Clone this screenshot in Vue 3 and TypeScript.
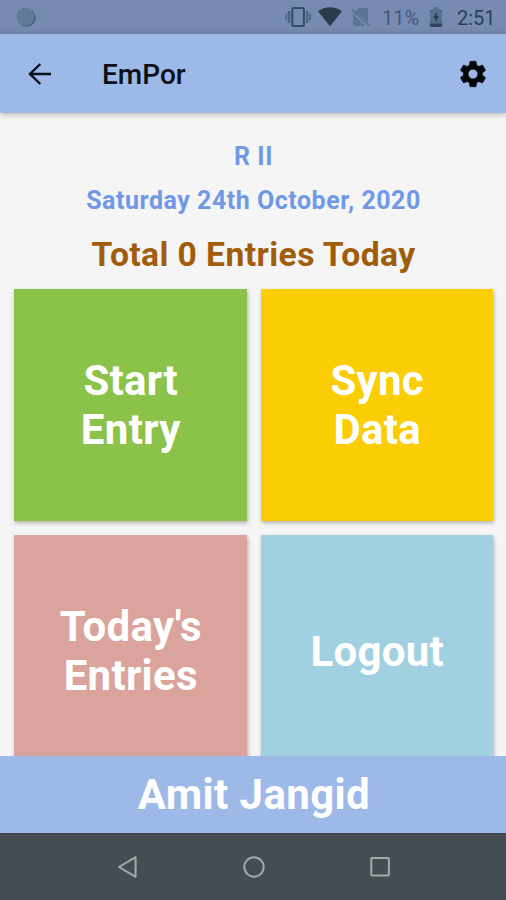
<script setup lang="ts">
interface Tile {
  id: string
  lines: string[]
}

const tiles: Tile[] = [
  { id: 'start', lines: ['Start', 'Entry'] },
  { id: 'sync', lines: ['Sync', 'Data'] },
  { id: 'today', lines: ["Today's", 'Entries'] },
  { id: 'logout', lines: ['Logout'] },
]
</script>

<template>
  <div class="screen">
    <div class="status">
      <svg class="dot" viewBox="0 0 20 20">
        <circle cx="10.7" cy="10.7" r="9" fill="#445c7b" />
        <circle cx="9.6" cy="9.6" r="9" fill="#617896" />
      </svg>
      <svg class="vibrate" viewBox="0 0 26 22">
        <rect x="7.3" y="2" width="11.6" height="18" rx="1.6" fill="none" stroke="#344b66" stroke-width="2" />
        <path d="M4 5v12M22.2 5v12" stroke="#4f6684" stroke-width="2.6" />
        <path d="M1.2 8v6M25 8v6" stroke="#4f6684" stroke-width="1.8" />
      </svg>
      <svg class="wifi" viewBox="0 0 24 20">
        <path d="M0 4.2C7 -1.1 17 -1.1 24 4.2L12 19.2Z" fill="#2b3b4d" />
      </svg>
      <svg class="sim" viewBox="0 0 20 20">
        <path d="M8.2 1H15q2 0 2 2v12.6L4.4 4.8ZM2 6.6 14.5 19H4q-2 0-2-2Z" fill="#5d7394" />
        <path d="M.7 2.3 18.3 18.8" stroke="#5d7394" stroke-width="1.7" />
      </svg>
      <span class="percent">11%</span>
      <svg class="battery" viewBox="0 0 12 20">
        <path d="M3.7 0h4.6v2H11q1 0 1 1v14H0V3q0-1 1-1h2.7Z" fill="#596f8e" />
        <path d="M0 16.5h12V19q0 1-1 1H1q-1 0-1-1Z" fill="#2e435c" />
        <path d="M7 4.5 3 11h2.5v4.5L9 9H6.5Z" fill="#263b54" />
      </svg>
      <span class="clock">2:51</span>
    </div>

    <header class="appbar">
      <svg class="back" viewBox="0 0 24 24">
        <path d="M12.3 2 2 12l10.3 10M2.5 12H23" fill="none" stroke="#0b0f16" stroke-width="2.4" />
      </svg>
      <h1>EmPor</h1>
      <svg class="gear" viewBox="0 0 24 24">
        <path d="M19.14 12.94c.04-.3.06-.61.06-.94 0-.32-.02-.64-.07-.94l2.03-1.58c.18-.14.23-.41.12-.61l-1.92-3.32c-.12-.22-.37-.29-.59-.22l-2.39.96c-.5-.38-1.03-.7-1.62-.94l-.36-2.54c-.04-.24-.24-.41-.48-.41h-3.84c-.24 0-.43.17-.47.41l-.36 2.54c-.59.24-1.13.57-1.62.94l-2.39-.96c-.22-.08-.47 0-.59.22L2.74 8.87c-.12.21-.08.47.12.61l2.03 1.58c-.05.3-.09.63-.09.94s.02.64.07.94l-2.03 1.58c-.18.14-.23.41-.12.61l1.92 3.32c.12.22.37.29.59.22l2.39-.96c.5.38 1.03.7 1.62.94l.36 2.54c.05.24.24.41.48.41h3.84c.24 0 .44-.17.47-.41l.36-2.54c.59-.24 1.13-.56 1.62-.94l2.39.96c.22.08.47 0 .59-.22l1.92-3.32c.12-.22.07-.47-.12-.61l-2.01-1.58zM12 15.6c-1.98 0-3.6-1.62-3.6-3.6s1.62-3.6 3.6-3.6 3.6 1.62 3.6 3.6-1.62 3.6-3.6 3.6z" fill="#05070a" stroke="#05070a" stroke-width=".4" />
      </svg>
    </header>

    <main class="content">
      <p class="info">R II</p>
      <p class="info date">Saturday 24th October, 2020</p>
      <p class="total">Total 0 Entries Today</p>
      <div class="grid">
        <button v-for="tile in tiles" :key="tile.id" class="tile" :class="tile.id">
          <span v-for="line in tile.lines" :key="line">{{ line }}</span>
        </button>
      </div>
    </main>

    <footer class="user">Amit Jangid</footer>

    <nav class="nav">
      <svg viewBox="0 0 24 24"><path d="M20.6 2.2v19.600L4 12Z" fill="none" stroke="#a3aaac" stroke-width="2" stroke-linejoin="round" /></svg>
      <svg viewBox="0 0 24 24"><circle cx="12" cy="12" r="9.7" fill="none" stroke="#a3aaac" stroke-width="2" /></svg>
      <svg viewBox="0 0 24 24"><rect x="3.3" y="3" width="17.6" height="17.6" rx="1" fill="none" stroke="#a3aaac" stroke-width="2" /></svg>
    </nav>
  </div>
</template>

<style>
body {
  margin: 0;
}
</style>

<style scoped>
.screen {
  width: 506px;
  height: 900px;
  display: flex;
  flex-direction: column;
  overflow: hidden;
  background: #f5f5f5;
  font-family: Roboto, "Liberation Sans", sans-serif;
}
svg {
  display: block;
  flex: none;
}
.status {
  flex: none;
  height: 34px;
  box-sizing: border-box;
  padding: 0 11px 0 16px;
  display: flex;
  align-items: center;
  background: #778bb2;
}
.dot {
  width: 20px;
  height: 20px;
  margin-right: auto;
}
.vibrate {
  width: 26px;
  height: 22px;
}
.wifi {
  width: 24px;
  height: 20px;
  margin-left: 7px;
}
.sim {
  width: 20px;
  height: 20px;
  margin-left: 9px;
}
.percent {
  width: 39px;
  margin-left: 11px;
  font-size: 20px;
  line-height: 24px;
  padding-top: 2px;
  white-space: nowrap;
  color: #43597a;
}
.battery {
  width: 12px;
  height: 20px;
  margin-left: 9px;
}
.clock {
  width: 38px;
  margin-left: 15px;
  font-size: 20px;
  line-height: 24px;
  padding-top: 2px;
  white-space: nowrap;
  color: #2b3f58;
}
.appbar {
  flex: none;
  position: relative;
  z-index: 1;
  height: 79px;
  box-sizing: border-box;
  padding: 0 18px 0 28px;
  display: flex;
  align-items: center;
  background: #9db9e8;
  box-shadow: 0 1px 6px rgba(0, 0, 0, 0.3);
}
.back {
  width: 24px;
  height: 24px;
}
h1 {
  margin: 2px auto 0 50px;
  font-size: 28px;
  font-weight: 500;
  line-height: 32px;
  color: #0c1017;
}
.gear {
  width: 32px;
  height: 32px;
  margin-right: -1px;
}
.content {
  flex: 1;
  min-height: 0;
  overflow: hidden;
  padding: 29px 13px 0 14px;
}
p {
  margin: 0;
  text-align: center;
}
.info {
  font-size: 25px;
  line-height: 30px;
  font-weight: 700;
  letter-spacing: 0.52px;
  color: #7099e5;
}
.date {
  margin-top: 14px;
}
.total {
  margin-top: 19px;
  font-size: 33.7px;
  line-height: 40px;
  font-weight: 700;
  letter-spacing: 0.4px;
  color: #a15c0a;
}
.grid {
  margin-top: 14px;
  display: grid;
  grid-template-columns: 232.5px 232.5px;
  grid-auto-rows: 232px;
  gap: 14px;
}
.tile {
  border: 0;
  padding: 0 0 0 1px;
  display: flex;
  flex-direction: column;
  align-items: center;
  justify-content: center;
  font: 700 42px/49px Roboto, "Liberation Sans", sans-serif;
  letter-spacing: 0.3px;
  color: #fff;
  box-shadow: 1px 2px 4px rgba(0, 0, 0, 0.28);
}
.start {
  background: #8bc34a;
}
.sync {
  background: #facd05;
}
.today {
  background: #daa39c;
}
.logout {
  background: #a1d0e0;
}
.user {
  flex: none;
  height: 77px;
  padding-left: 2px;
  background: #9db9e8;
  font-size: 42px;
  line-height: 78px;
  font-weight: 700;
  letter-spacing: 0.4px;
  text-align: center;
  color: #fff;
}
.nav {
  flex: none;
  height: 67px;
  box-sizing: border-box;
  border-top: 1px solid #39414a;
  padding: 0 114px 1px 115px;
  display: flex;
  align-items: center;
  justify-content: space-between;
  background: #464d52;
}
.nav svg {
  width: 24px;
  height: 24px;
}
</style>
